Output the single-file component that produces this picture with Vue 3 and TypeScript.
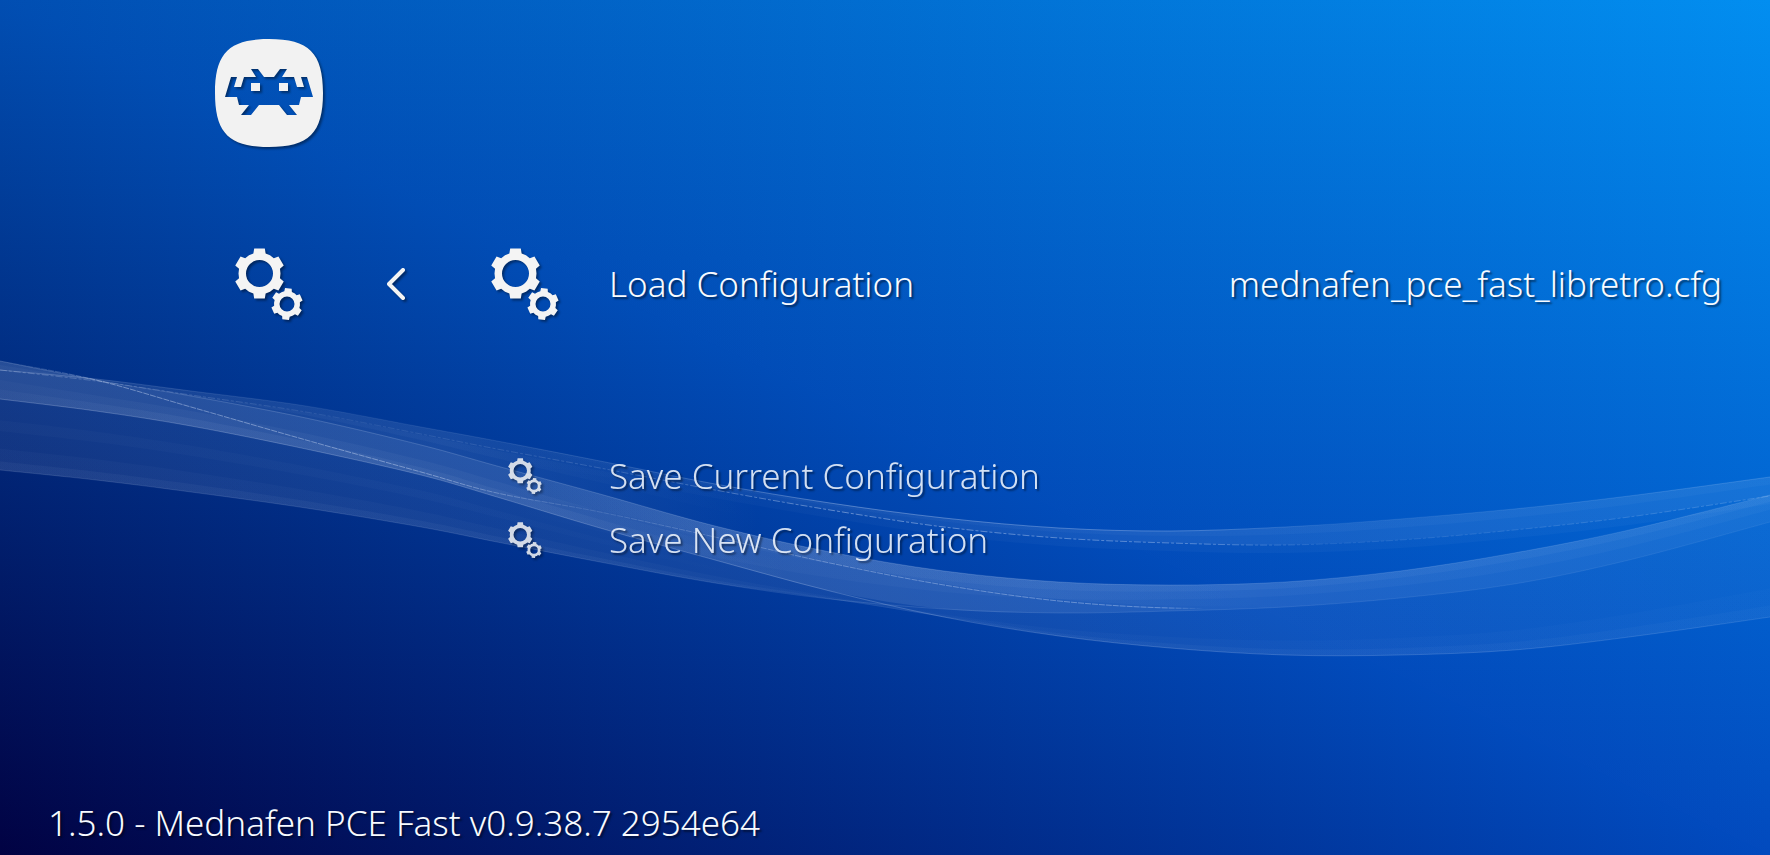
<script setup lang="ts">
import { ref } from 'vue'

interface Entry {
  label: string
  value?: string
}

const current: Entry = { label: 'Load Configuration', value: 'mednafen_pce_fast_libretro.cfg' }
const following = ref<Entry[]>([
  { label: 'Save Current Configuration' },
  { label: 'Save New Configuration' },
])
const version = '1.5.0 - Mednafen PCE Fast v0.9.38.7 2954e64'

// One gear outline: six teeth between the outer and the root radius, round hole.
function gear(cx: number, cy: number, outer: number, root: number, hole: number, turn: number): string {
  const points: string[] = []
  for (let i = 0; i < 6; i++) {
    const mid = turn + i * 60
    const steps: [number, number][] = [
      [root, -17], [outer, -12], [outer, 12], [root, 17], [root, 30],
    ]
    for (const [radius, offset] of steps) {
      const a = ((mid + offset) * Math.PI) / 180
      points.push(`${(cx + radius * Math.cos(a)).toFixed(2)} ${(cy + radius * Math.sin(a)).toFixed(2)}`)
    }
  }
  return `M${points.join('L')}Z M${cx - hole} ${cy}a${hole} ${hole} 0 1 0 ${hole * 2} 0a${hole} ${hole} 0 1 0 ${-hole * 2} 0Z`
}

const gears = gear(24.5, 25.5, 25.5, 21, 13.5, 30) + gear(52, 56, 16, 13, 7.5, 35)

// Ribbon curves: heights sampled at shared x stations.
type Curve = number[]
const xs: Curve = [0, 96, 191, 306, 421, 497, 600, 715, 830, 944, 1059, 1170, 1285, 1400, 1514, 1629, 1770]
const crest: Curve = [370, 379, 391, 406, 427, 441, 461, 484, 503, 518, 528, 531, 527, 519, 509, 496, 477]
const trail: Curve = [370, 381, 395, 412, 434, 449, 468, 490, 510, 527, 538, 543, 545, 540, 530, 517, 496]
const trailGlow: Curve = trail.map((y, i) => y + (i < 5 ? 0 : 8))
const brow: Curve = [361, 380, 396, 418, 445, 466, 494, 526, 552, 571, 582, 585, 582, 571, 553, 530, 495]
const rise: Curve = [399, 411, 426, 449, 475, 497, 528, 560, 591, 617, 636, 648, 655, 655, 650, 637, 617]
const dip: Curve = [470, 480, 492, 508, 527, 542, 562, 583, 599, 609, 613, 611, 607, 598, 584, 560, 522]
const thread: Curve = [361, 380, 407, 440, 472, 493, 512, 537, 563, 585, 601, 608, 607, 598, 584, 560, 522]
const upperOf = (a: Curve, b: Curve): Curve => a.map((y, i) => Math.min(y, b[i]))
const lowerOf = (a: Curve, b: Curve): Curve => a.map((y, i) => Math.max(y, b[i]))
const mix = (a: Curve, b: Curve, t: number): Curve => a.map((y, i) => y + (b[i] - y) * t)
const inner = upperOf(rise, dip)
const outerEdge = lowerOf(rise, dip)

function segments(px: Curve, py: Curve): string {
  let d = ''
  for (let i = 0; i < px.length - 1; i++) {
    const p = Math.max(i - 1, 0)
    const n = Math.min(i + 2, px.length - 1)
    d += `C${px[i] + (px[i + 1] - px[p]) / 6} ${py[i] + (py[i + 1] - py[p]) / 6} ${px[i + 1] - (px[n] - px[i]) / 6} ${py[i + 1] - (py[n] - py[i]) / 6} ${px[i + 1]} ${py[i + 1]}`
  }
  return d
}
const line = (c: Curve): string => `M0 ${c[0]}${segments(xs, c)}`
function area(top: Curve, bottom: Curve): string {
  const rx = [...xs].reverse()
  const rb = [...bottom].reverse()
  return `${line(top)}L1770 ${rb[0]}${segments(rx, rb)}Z`
}

interface Fade {
  id: string
  stops: [number, number][]
}
const fades: Fade[] = [
  { id: 'early', stops: [[0, 1], [0.25, 1], [0.43, 0]] },
  { id: 'left', stops: [[0, 0.5], [0.1, 1], [0.3, 1], [0.45, 0]] },
  { id: 'middle', stops: [[0.28, 0], [0.42, 1], [0.6, 1], [0.72, 0]] },
  { id: 'late', stops: [[0.28, 0], [0.45, 0.8], [0.66, 1], [1, 1]] },
  { id: 'whole', stops: [[0, 1], [0.5, 1], [1, 0.55]] },
  { id: 'ridge', stops: [[0, 0.6], [0.2, 0.2], [0.34, 0.4], [0.48, 1], [0.68, 0.8], [0.75, 0.2], [1, 0.5]] },
  { id: 'thread', stops: [[0, 0], [0.06, 1], [0.25, 1], [0.33, 0.3], [0.45, 0.8], [0.66, 0.9], [0.68, 0]] },
]

interface Sheet {
  d: string
  fade: string
  alpha: number
}
const sheets: Sheet[] = [
  { d: area(crest, lowerOf(crest, brow)), fade: 'early', alpha: 0.1 },
  { d: area(mix(trail, brow, 0.1), mix(trail, brow, 0.55)), fade: 'early', alpha: 0.03 },
  { d: area(crest, trail), fade: 'late', alpha: 0.09 },
  { d: area(crest, mix(crest, trail, 0.4)), fade: 'late', alpha: 0.03 },
  { d: area(trail, trailGlow), fade: 'late', alpha: 0.03 },
  { d: area(brow, inner), fade: 'whole', alpha: 0.17 },
  { d: area(mix(brow, rise, 0.5), rise), fade: 'left', alpha: 0.04 },
  { d: area(mix(brow, rise, 0.75), rise), fade: 'left', alpha: 0.05 },
  { d: area(brow, mix(brow, thread, 0.9)), fade: 'middle', alpha: 0.04 },
  { d: area(brow, mix(brow, dip, 0.25)), fade: 'late', alpha: 0.04 },
  { d: area(brow, mix(brow, dip, 0.55)), fade: 'late', alpha: 0.03 },
  { d: area(inner, outerEdge), fade: 'whole', alpha: 0.08 },
  { d: area(mix(inner, outerEdge, 0.3), mix(inner, outerEdge, 0.45)), fade: 'early', alpha: 0.02 },
  { d: area(mix(inner, outerEdge, 0.7), outerEdge), fade: 'whole', alpha: 0.025 },
  { d: area(mix(inner, outerEdge, 0.88), outerEdge), fade: 'whole', alpha: 0.04 },
]

interface Stroke extends Sheet {
  dash?: string
}
const strokes: Stroke[] = [
  { d: line(crest), fade: 'ridge', alpha: 0.32 },
  { d: line(trail), fade: 'ridge', alpha: 0.4, dash: '7 2 3 2' },
  { d: line(brow), fade: 'whole', alpha: 0.18 },
  { d: line(rise), fade: 'whole', alpha: 0.22 },
  { d: line(dip), fade: 'whole', alpha: 0.12 },
  { d: line(thread), fade: 'thread', alpha: 0.4, dash: '6 1' },
]
</script>

<template>
  <main class="screen">
    <svg class="backdrop" viewBox="0 0 1770 855" preserveAspectRatio="none" aria-hidden="true">
      <defs>
        <linearGradient id="lowX"><stop offset="0" stop-color="#000" /><stop offset="1" stop-color="rgb(0,72,123)" /></linearGradient>
        <linearGradient id="lowY" x2="0" y2="1"><stop offset="0" stop-color="rgb(0,76,111)" /><stop offset="1" stop-color="#000" /></linearGradient>
        <linearGradient id="highX"><stop offset="0" stop-color="#000" /><stop offset="1" stop-color="rgb(1,64,62)" /></linearGradient>
        <linearGradient id="highY" x2="0" y2="1"><stop offset="0" stop-color="rgb(0,68,50)" /><stop offset="1" stop-color="#000" /></linearGradient>
        <linearGradient v-for="f in fades" :id="f.id" :key="f.id" gradientUnits="userSpaceOnUse" x1="0" y1="0" x2="1770" y2="0">
          <stop v-for="s in f.stops" :key="s[0]" :offset="s[0]" stop-color="#dfeaff" :stop-opacity="s[1]" />
        </linearGradient>
        <clipPath id="upper"><path d="M0 0H1770V855Z" /></clipPath>
      </defs>
      <g class="blend">
        <rect width="1770" height="855" fill="rgb(1,2,67)" />
        <rect class="add" width="1770" height="855" fill="url(#lowX)" />
        <rect class="add" width="1770" height="855" fill="url(#lowY)" />
      </g>
      <g class="blend" clip-path="url(#upper)">
        <rect width="1770" height="855" fill="rgb(1,10,128)" />
        <rect class="add" width="1770" height="855" fill="url(#highX)" />
        <rect class="add" width="1770" height="855" fill="url(#highY)" />
      </g>
      <path v-for="(s, i) in sheets" :key="'sheet' + i" :d="s.d" :fill="`url(#${s.fade})`" :fill-opacity="s.alpha" />
      <path v-for="(s, i) in strokes" :key="'stroke' + i" :d="s.d" fill="none" :stroke="`url(#${s.fade})`" :stroke-opacity="s.alpha" :stroke-dasharray="s.dash" />
    </svg>

    <header class="brand">
      <svg class="logo" viewBox="0 0 108 108" role="img" aria-label="RetroArch">
        <path fill="#f2f2f2" fill-rule="evenodd" d="M54 0C94 0 108 14 108 54S94 108 54 108S0 94 0 54S14 0 54 0ZM36 30L41 38H29L26 48H19L22 38H16L10 58H22L24 66H34L26 76H36L44 66H64L72 76H82L74 66H84L86 58H98L92 38H86L89 48H82L79 38H67L72 30H65L59 38H49L43 30ZM36 44H45V52H36ZM64 44H73V52H64Z" />
      </svg>
    </header>

    <nav class="menu">
      <div class="row current">
        <svg class="big category" viewBox="0 0 68 72" role="img" aria-label="Settings"><path fill="#f4f4f4" fill-rule="evenodd" :d="gears" /></svg>
        <button class="back" type="button" aria-label="Back">
          <svg viewBox="0 0 18 32" width="18" height="32"><path d="M16 2L2 16L16 30" fill="none" stroke="#f4f4f4" stroke-width="4" stroke-linecap="round" stroke-linejoin="round" /></svg>
        </button>
        <button class="entry" type="button">
          <span class="slot"><svg class="big" viewBox="0 0 68 72" aria-hidden="true"><path fill="#f4f4f4" fill-rule="evenodd" :d="gears" /></svg></span>
          <span class="label">{{ current.label }}</span>
          <span class="value">{{ current.value }}</span>
        </button>
      </div>
      <button v-for="item in following" :key="item.label" class="entry next" type="button">
        <span class="slot"><svg class="small" viewBox="0 0 68 72" aria-hidden="true"><path fill="#f4f4f4" fill-rule="evenodd" :d="gears" /></svg></span>
        <span class="label">{{ item.label }}</span>
      </button>
    </nav>

    <footer class="version">{{ version }}</footer>
  </main>
</template>

<style>
body {
  margin: 0;
  background: #0147a8;
}
</style>

<style scoped>
.screen {
  position: relative;
  box-sizing: border-box;
  min-height: 100vh;
  display: flex;
  flex-direction: column;
  overflow: hidden;
  color: #f8fbff;
  font: 300 35px/48px "Noto Sans", "Open Sans", sans-serif;
  font-variant-ligatures: none;
  text-shadow: 2px 2px 2px rgba(0, 0, 0, 0.5);
}
.backdrop {
  position: absolute;
  inset: 0;
  width: 100%;
  height: 100%;
}
.blend {
  isolation: isolate;
}
.add {
  mix-blend-mode: plus-lighter;
}
.brand,
.menu,
.version {
  position: relative;
}
.logo,
.big,
.small,
.back svg {
  display: block;
  overflow: visible;
  filter: drop-shadow(2px 2px 1px rgba(0, 0, 0, 0.4));
}
.brand {
  padding: 39px 0 0 215px;
}
.logo {
  width: 108px;
  height: 108px;
}
.menu {
  display: flex;
  flex-direction: column;
  padding: 101px 48px 0 0;
}
.row {
  display: flex;
  align-items: center;
  padding-left: 235px;
  margin-bottom: 124px;
}
.big {
  width: 68px;
  height: 72px;
}
.category {
  flex: none;
}
button {
  padding: 0;
  border: 0;
  background: none;
  color: inherit;
  font: inherit;
  font-variant-ligatures: none;
  text-shadow: inherit;
  text-align: left;
  cursor: pointer;
}
.back {
  flex: none;
  margin: 0 86px 0 84px;
}
.entry {
  flex: 1;
  display: flex;
  align-items: center;
  white-space: nowrap;
}
.slot {
  flex: none;
  width: 68px;
  margin-right: 50px;
}
.value {
  margin-left: auto;
}
.next {
  height: 64px;
  flex: none;
  padding-left: 491px;
  opacity: 0.85;
}
.small {
  width: 34px;
  height: 36px;
  margin: 0 auto;
}
.version {
  margin-top: auto;
  padding: 0 48px 8px;
}
</style>
